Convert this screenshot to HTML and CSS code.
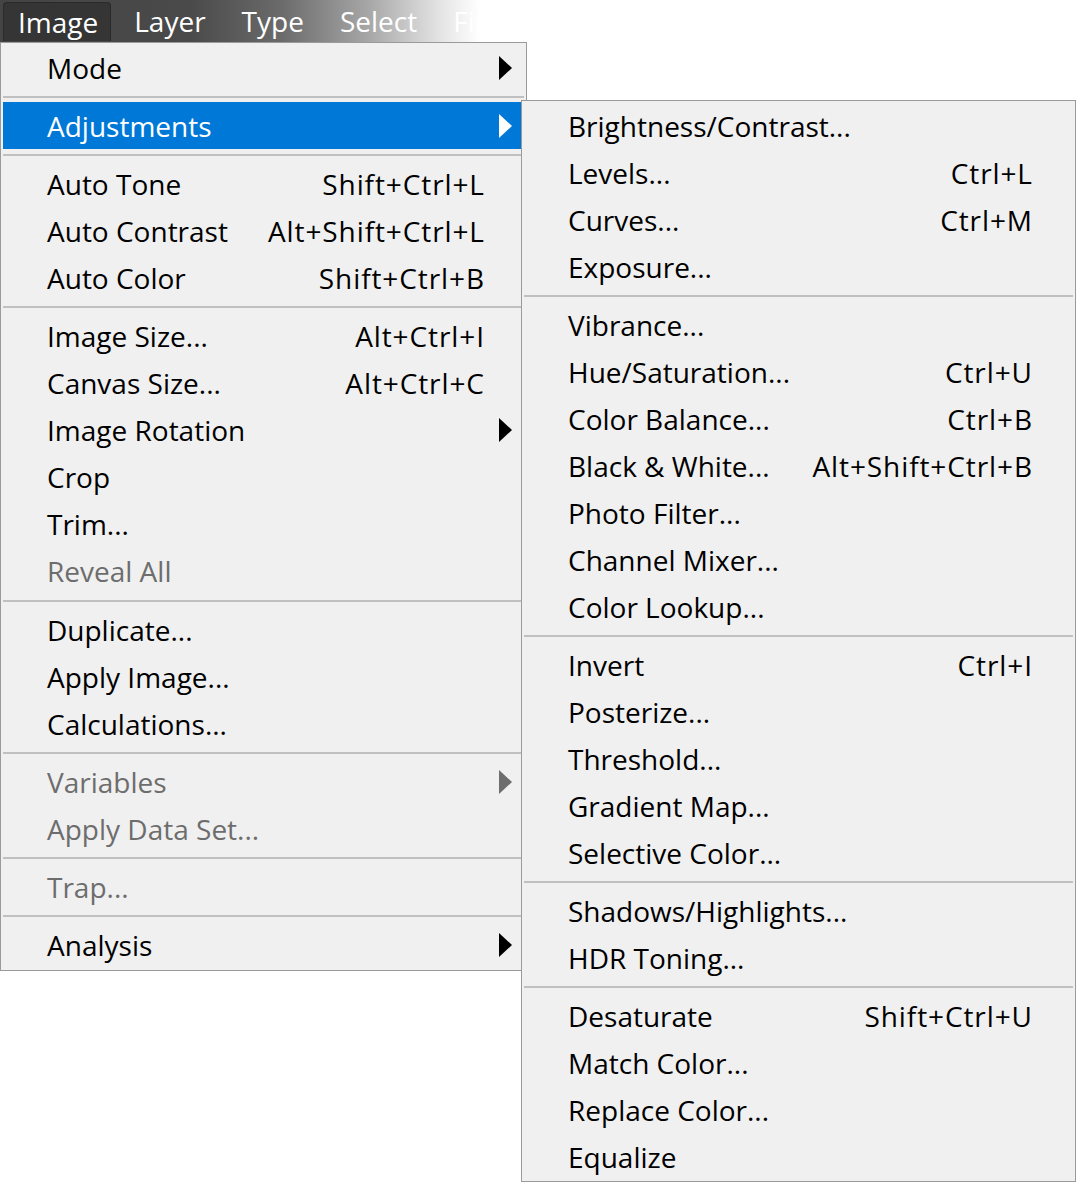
FILE: index.html
```html
<!DOCTYPE html>
<html>
<head>
<meta charset="utf-8">
<link rel="stylesheet" href="styles.css">
</head>
<body>
<div class="bar">
  <div class="bar-item active">Image</div>
  <div class="bar-item">Layer</div>
  <div class="bar-item">Type</div>
  <div class="bar-item">Select</div>
  <div class="bar-item">Filter</div>
</div>
<div class="menus">
  <div class="menu main">
    <div class="item"><span class="label">Mode</span><span class="key"></span><span class="tail"><svg class="arrow" viewBox="0 0 13 24"><polygon points="0,0 13,12 0,24"/></svg></span></div>
    <div class="sep"></div>
    <div class="item hl"><span class="label">Adjustments</span><span class="key"></span><span class="tail"><svg class="arrow" viewBox="0 0 13 24"><polygon points="0,0 13,12 0,24"/></svg></span></div>
    <div class="sep"></div>
    <div class="item"><span class="label">Auto Tone</span><span class="key">Shift+Ctrl+L</span><span class="tail"></span></div>
    <div class="item"><span class="label">Auto Contrast</span><span class="key">Alt+Shift+Ctrl+L</span><span class="tail"></span></div>
    <div class="item"><span class="label">Auto Color</span><span class="key">Shift+Ctrl+B</span><span class="tail"></span></div>
    <div class="sep"></div>
    <div class="item"><span class="label">Image Size...</span><span class="key">Alt+Ctrl+I</span><span class="tail"></span></div>
    <div class="item"><span class="label">Canvas Size...</span><span class="key">Alt+Ctrl+C</span><span class="tail"></span></div>
    <div class="item"><span class="label">Image Rotation</span><span class="key"></span><span class="tail"><svg class="arrow" viewBox="0 0 13 24"><polygon points="0,0 13,12 0,24"/></svg></span></div>
    <div class="item"><span class="label">Crop</span><span class="key"></span><span class="tail"></span></div>
    <div class="item"><span class="label">Trim...</span><span class="key"></span><span class="tail"></span></div>
    <div class="item off"><span class="label">Reveal All</span><span class="key"></span><span class="tail"></span></div>
    <div class="sep"></div>
    <div class="item"><span class="label">Duplicate...</span><span class="key"></span><span class="tail"></span></div>
    <div class="item"><span class="label">Apply Image...</span><span class="key"></span><span class="tail"></span></div>
    <div class="item"><span class="label">Calculations...</span><span class="key"></span><span class="tail"></span></div>
    <div class="sep"></div>
    <div class="item off"><span class="label">Variables</span><span class="key"></span><span class="tail"><svg class="arrow" viewBox="0 0 13 24"><polygon points="0,0 13,12 0,24"/></svg></span></div>
    <div class="item off"><span class="label">Apply Data Set...</span><span class="key"></span><span class="tail"></span></div>
    <div class="sep"></div>
    <div class="item off"><span class="label">Trap...</span><span class="key"></span><span class="tail"></span></div>
    <div class="sep"></div>
    <div class="item"><span class="label">Analysis</span><span class="key"></span><span class="tail"><svg class="arrow" viewBox="0 0 13 24"><polygon points="0,0 13,12 0,24"/></svg></span></div>
  </div>
  <div class="menu sub">
    <div class="item"><span class="label">Brightness/Contrast...</span><span class="key"></span><span class="tail"></span></div>
    <div class="item"><span class="label">Levels...</span><span class="key">Ctrl+L</span><span class="tail"></span></div>
    <div class="item"><span class="label">Curves...</span><span class="key">Ctrl+M</span><span class="tail"></span></div>
    <div class="item"><span class="label">Exposure...</span><span class="key"></span><span class="tail"></span></div>
    <div class="sep"></div>
    <div class="item"><span class="label">Vibrance...</span><span class="key"></span><span class="tail"></span></div>
    <div class="item"><span class="label">Hue/Saturation...</span><span class="key">Ctrl+U</span><span class="tail"></span></div>
    <div class="item"><span class="label">Color Balance...</span><span class="key">Ctrl+B</span><span class="tail"></span></div>
    <div class="item"><span class="label">Black &amp; White...</span><span class="key">Alt+Shift+Ctrl+B</span><span class="tail"></span></div>
    <div class="item"><span class="label">Photo Filter...</span><span class="key"></span><span class="tail"></span></div>
    <div class="item"><span class="label">Channel Mixer...</span><span class="key"></span><span class="tail"></span></div>
    <div class="item"><span class="label">Color Lookup...</span><span class="key"></span><span class="tail"></span></div>
    <div class="sep"></div>
    <div class="item"><span class="label">Invert</span><span class="key">Ctrl+I</span><span class="tail"></span></div>
    <div class="item"><span class="label">Posterize...</span><span class="key"></span><span class="tail"></span></div>
    <div class="item"><span class="label">Threshold...</span><span class="key"></span><span class="tail"></span></div>
    <div class="item"><span class="label">Gradient Map...</span><span class="key"></span><span class="tail"></span></div>
    <div class="item"><span class="label">Selective Color...</span><span class="key"></span><span class="tail"></span></div>
    <div class="sep"></div>
    <div class="item"><span class="label">Shadows/Highlights...</span><span class="key"></span><span class="tail"></span></div>
    <div class="item"><span class="label">HDR Toning...</span><span class="key"></span><span class="tail"></span></div>
    <div class="sep"></div>
    <div class="item"><span class="label">Desaturate</span><span class="key">Shift+Ctrl+U</span><span class="tail"></span></div>
    <div class="item"><span class="label">Match Color...</span><span class="key"></span><span class="tail"></span></div>
    <div class="item"><span class="label">Replace Color...</span><span class="key"></span><span class="tail"></span></div>
    <div class="item"><span class="label">Equalize</span><span class="key"></span><span class="tail"></span></div>
  </div>
</div>
</body>
</html>
```

FILE: styles.css
```css
html, body {
  margin: 0;
  padding: 0;
  background: #ffffff;
}

body {
  font-family: "Open Sans", "Noto Sans", sans-serif;
  font-size: 28px;
  color: #000;
}

.bar {
  height: 42px;
  display: flex;
  align-items: flex-start;
  padding-left: 3px;
  overflow: hidden;
  background: linear-gradient(90deg, #444444 0px, #4a4a4a 190px, #6a6a6a 280px, #a8a8a8 370px, #e4e4e4 440px, #ffffff 480px);
}

.bar-item {
  color: #ffffff;
  line-height: 42px;
  padding: 0 18px;
  white-space: nowrap;
}

.bar-item.active {
  margin-top: 2px;
  line-height: 38px;
  padding: 0 12px 0 14px;
  margin-right: 5px;
  background: #353535;
  border: 1px solid #2a2a2a;
  border-bottom: 0;
  border-radius: 4px 4px 0 0;
}

.menus {
  display: flex;
  align-items: flex-start;
}

.menu {
  box-sizing: border-box;
  flex: none;
  background: #f0f0f0;
  border: 1px solid #9a9a9a;
  padding: 1px 2px;
}

.main {
  width: 527px;
}

.sub {
  width: 555px;
  margin-top: 58px;
  margin-left: -6px;
}

.item {
  display: flex;
  align-items: center;
  height: 47.1px;
  padding-left: 44px;
  white-space: nowrap;
}

.sub .item {
  height: 47px;
}

.label {
  flex: 1;
}

.key {
  letter-spacing: 0.9px;
  margin-right: -0.9px;
}

.tail {
  width: 41px;
  flex: none;
  display: flex;
  align-items: center;
}

.main .tail {
  width: 40px;
}

.arrow {
  width: 13px;
  height: 24px;
  margin-left: 15px;
  fill: #000;
}

.item.hl {
  background: #0078d7;
  color: #ffffff;
}

.item.hl .arrow {
  fill: #ffffff;
}

.item.off {
  color: #6d6d6d;
}

.item.off .arrow {
  fill: #6d6d6d;
}

.sep {
  height: 2px;
  margin: 4.5px 0;
  background: #c0c0c0;
}
```
